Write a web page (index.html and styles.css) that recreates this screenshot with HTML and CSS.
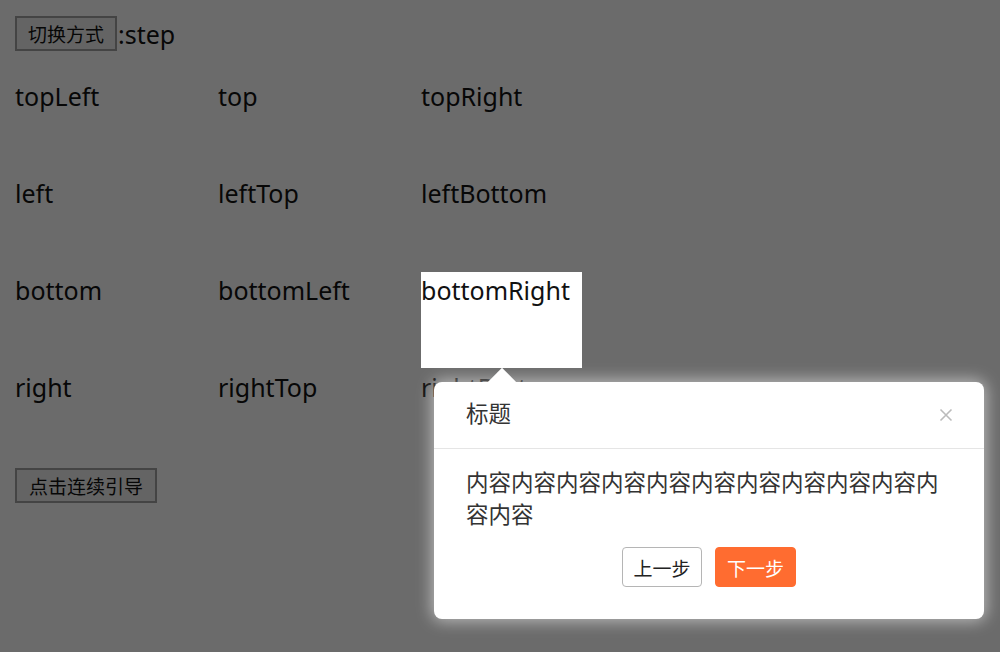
FILE: index.html
```html
<!DOCTYPE html>
<html lang="zh">
<head>
<meta charset="utf-8">
<title>Guide</title>
<link rel="stylesheet" href="styles.css">
</head>
<body>
  <div class="toolbar">
    <button class="btn">切换方式</button><span class="mode">:step</span>
  </div>
  <div class="grid">
    <div class="cell">topLeft</div>
    <div class="cell">top</div>
    <div class="cell">topRight</div>
    <div class="cell">left</div>
    <div class="cell">leftTop</div>
    <div class="cell">leftBottom</div>
    <div class="cell">bottom</div>
    <div class="cell">bottomLeft</div>
    <div class="cell highlight">bottomRight
      <div class="popover">
        <div class="pop-header">
          <span class="pop-title">标题</span>
          <svg class="pop-close" width="14" height="14" viewBox="0 0 14 14"><path d="M1.5 1.5L12.5 12.5M12.5 1.5L1.5 12.5" stroke="#bbbbbb" stroke-width="1.6" fill="none"/></svg>
        </div>
        <div class="pop-body">内容内容内容内容内容内容内容内容内容内容内容内容</div>
        <div class="pop-footer">
          <button class="pbtn prev">上一步</button>
          <button class="pbtn next">下一步</button>
        </div>
      </div>
    </div>
    <div class="cell">right</div>
    <div class="cell">rightTop</div>
    <div class="cell">rightBottom</div>
  </div>
  <button class="btn guide">点击连续引导</button>
</body>
</html>
```
FILE: styles.css
```css
html, body {
  margin: 0;
  background: #ffffff;
  overflow: hidden;
}
body {
  padding: 16px 15px;
  font-family: "Noto Sans", "Noto Sans CJK SC", sans-serif;
  color: #111;
  height: 652px;
  box-sizing: border-box;
}
.toolbar {
  display: flex;
  align-items: center;
}
.btn {
  height: 35px;
  padding: 0 11px;
  border: 2px solid #a2a2a2;
  background: #efefef;
  color: #111;
  font-family: "Noto Sans CJK SC", sans-serif;
  font-size: 19px;
  line-height: 1;
  border-radius: 0;
}
.mode {
  font-size: 25px;
  margin-left: 1px;
}
.grid {
  margin-top: 27px;
  display: grid;
  grid-template-columns: repeat(3, 161px);
  grid-auto-rows: 96px;
  column-gap: 42px;
  row-gap: 1px;
}
.cell {
  font-size: 25px;
  line-height: normal;
  padding-top: 1px;
  box-sizing: border-box;
}
.guide {
  margin-top: 3px;
  padding: 0 12px;
}
.highlight {
  position: relative;
  z-index: 10;
  background: #fff;
  box-shadow: 0 0 0 3000px rgba(0, 0, 0, 0.58);
}
.popover {
  position: absolute;
  left: 13px;
  top: 110px;
  width: 550px;
  background: #fff;
  border-radius: 8px;
  box-shadow: 0 0 16px 2px rgba(255, 255, 255, 0.55);
  font-family: "Noto Sans CJK SC", sans-serif;
  color: #333;
  z-index: 11;
}
.popover::before {
  content: "";
  position: absolute;
  left: 58px;
  top: -10px;
  width: 20px;
  height: 20px;
  background: #fff;
  transform: rotate(45deg);
}
.pop-header {
  position: relative;
  height: 67px;
  box-sizing: border-box;
  padding: 0 32px 6px;
  display: flex;
  align-items: center;
  justify-content: space-between;
  border-bottom: 1px solid #e5e5e5;
}
.pop-title {
  font-size: 22.5px;
}
.pop-close {
  margin-right: -1px;
  margin-top: 6px;
}
.pop-body {
  padding: 16px 32px 0;
  font-size: 22.5px;
  line-height: 32px;
}
.pop-footer {
  display: flex;
  justify-content: center;
  gap: 13px;
  padding: 18px 0 32px;
}
.pbtn {
  height: 40px;
  width: 80px;
  border-radius: 4px;
  font-family: "Noto Sans CJK SC", sans-serif;
  font-size: 19px;
  padding: 0;
}
.prev {
  background: #fff;
  border: 1px solid #b5b5b5;
  color: #222;
}
.next {
  width: 81px;
  background: #ff6c30;
  border: 1px solid #ff6c30;
  color: #fff;
}
```
